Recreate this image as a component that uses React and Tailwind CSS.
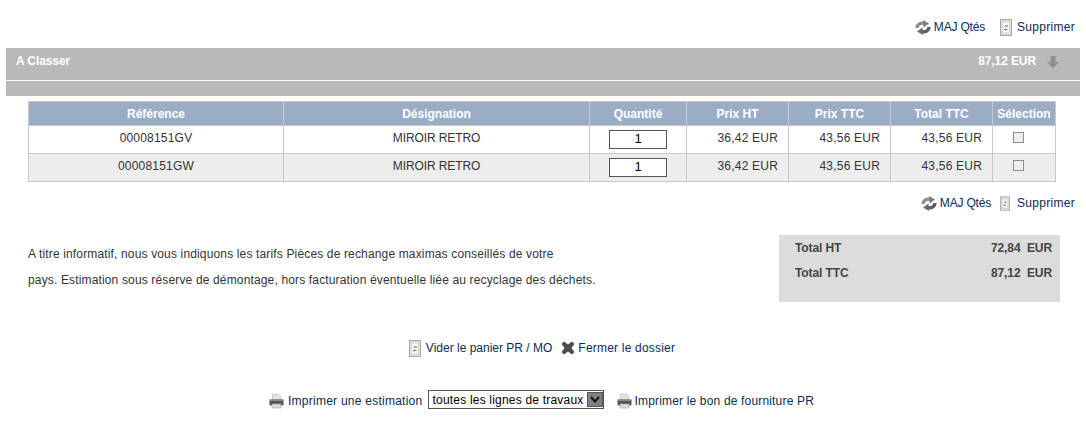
const font = { fontFamily: '"Liberation Sans", Arial, sans-serif' };

const RefreshIcon = () => (
  <svg width="16" height="15" viewBox="0 0 16 15" className="shrink-0">
    <path d="M2 8 C2 4.5 5 2.8 9 3.2" fill="none" stroke="#8f8f8f" strokeWidth="3.4" />
    <path d="M8 0 L14 3.4 L8.5 7.5 Z" fill="#7d7d7d" />
    <path d="M14 7 C14 10.5 11 12.2 7 11.8" fill="none" stroke="#5c5c5c" strokeWidth="3.4" />
    <path d="M8 15 L2 11.6 L7.5 7.5 Z" fill="#6a6a6a" />
  </svg>
);

const TrashIcon = ({ w = 12, h = 17 }) => (
  <svg width={w} height={h} viewBox="0 0 12 17" className="shrink-0">
    <rect x="0.5" y="0.5" width="11" height="16" fill="#dededa" stroke="#a8a8a4" />
    <rect x="2.5" y="3" width="7" height="11" fill="#f6f6f4" stroke="#c8c8c4" strokeWidth="0.6" />
    <path d="M4.5 7 L7.5 7 M6.5 6 L7.5 7 L6.5 8 M7.5 10.5 L4.5 10.5 M5.5 9.5 L4.5 10.5 L5.5 11.5" stroke="#666" strokeWidth="0.8" fill="none" />
  </svg>
);

const PrintIcon = () => (
  <svg width="17" height="16" viewBox="0 0 16 16" className="shrink-0">
    <path d="M4 1 H10 L12 3 V7 H4 Z" fill="#e2e2e2" stroke="#b5b5b5" strokeWidth="0.6" />
    <rect x="1" y="6.5" width="14" height="6" rx="1" fill="#555" />
    <rect x="1" y="6.5" width="14" height="1.5" fill="#8a8a8a" />
    <rect x="3.5" y="11" width="9" height="4" fill="#dcdcdc" stroke="#a5a5a5" strokeWidth="0.6" />
  </svg>
);

const CloseIcon = () => (
  <svg width="14" height="14" viewBox="0 0 14 14" className="shrink-0">
    <path d="M3 0.5 L7 3.5 L11 0.5 L13.5 3 L10.5 7 L13.5 11 L11 13.5 L7 10.5 L3 13.5 L0.5 11 L3.5 7 L0.5 3 Z" fill="#4c4c4c" />
  </svg>
);

const ArrowDownIcon = () => (
  <svg width="14" height="14" viewBox="0 0 14 14" className="shrink-0">
    <path d="M4.5 1 H9.5 V7 H13 L7 13.5 L1 7 H4.5 Z" fill="#8f8f8f" />
  </svg>
);

const ActionLink = ({ icon, children, className = 'gap-[3px]' }) => (
  <a className={`flex items-center text-[#0c2a55] whitespace-nowrap ${className}`}>
    {icon}
    <span>{children}</span>
  </a>
);

const lignes = [
  { ref: '00008151GV', bg: 'bg-white' },
  { ref: '00008151GW', bg: 'bg-[#ededed]' },
];

const entetes = ['Référence', 'Désignation', 'Quantité', 'Prix HT', 'Prix TTC', 'Total TTC', 'Sélection'];

export default function App() {
  return (
    <div style={font} className="w-[1086px] h-[435px] overflow-hidden bg-white text-[12px] text-[#333]">
      <div className="h-[48px] pr-[11px] pt-[18px] flex justify-end items-start gap-[15px]">
        <ActionLink icon={<RefreshIcon />} className="gap-[3px] tracking-[-0.2px]">MAJ Qtés</ActionLink>
        <ActionLink icon={<TrashIcon />} className="gap-[5px] tracking-[0.3px]">Supprimer</ActionLink>
      </div>

      <div className="mx-[6px] w-[1074px] bg-[#b9b9b9] text-white font-bold tracking-[-0.1px]">
        <div className="h-[32px] flex justify-between pl-[10px] pr-[20px] pt-[4px]">
          <span>A Classer</span>
          <span className="flex items-start gap-[10px]">
            87,12 EUR
            <span className="mt-[3px]"><ArrowDownIcon /></span>
          </span>
        </div>
        <div className="h-[1px] bg-white" />
        <div className="h-[15px]" />
      </div>

      <table className="ml-[28px] mt-[5px] w-[1027px] table-fixed border-collapse border border-[#c8c8c8]">
        <colgroup>
          <col className="w-[255px]" />
          <col className="w-[306px]" />
          <col className="w-[97px]" />
          <col className="w-[102px]" />
          <col className="w-[102px]" />
          <col className="w-[102px]" />
          <col className="w-[63px]" />
        </colgroup>
        <thead>
          <tr className="h-[24px] bg-[#9badc6] text-white font-bold">
            {entetes.map((titre) => (
              <th key={titre} className="border border-[#c8c8c8] p-0 font-bold text-center">{titre}</th>
            ))}
          </tr>
        </thead>
        <tbody>
          {lignes.map((ligne) => (
            <tr key={ligne.ref} className={`h-[28px] ${ligne.bg}`}>
              <td className="border border-[#c8c8c8] p-0 pb-[3px] text-center tracking-[0.2px]">{ligne.ref}</td>
              <td className="border border-[#c8c8c8] p-0 pb-[3px] text-center tracking-[-0.1px]">MIROIR RETRO</td>
              <td className="border border-[#c8c8c8] p-0 text-center">
                <input
                  readOnly
                  value="1"
                  className="block mx-auto mb-[1px] w-[58px] h-[19px] bg-white border border-[#555] text-center text-[13px] text-black"
                />
              </td>
              <td className="border border-[#c8c8c8] p-0 pb-[3px] pr-[10px] text-right tracking-[0.2px]">36,42 EUR</td>
              <td className="border border-[#c8c8c8] p-0 pb-[3px] pr-[10px] text-right tracking-[0.2px]">43,56 EUR</td>
              <td className="border border-[#c8c8c8] p-0 pb-[3px] pr-[10px] text-right tracking-[0.2px]">43,56 EUR</td>
              <td className="border border-[#c8c8c8] p-0 pb-[6px] pr-[12px] text-center">
                <span className="inline-block align-middle w-[11px] h-[11px] border border-[#8e8e8e] bg-[#eeeeee]" />
              </td>
            </tr>
          ))}
        </tbody>
      </table>

      <div className="mt-[12px] pr-[11px] flex justify-end gap-[9px]">
        <ActionLink icon={<RefreshIcon />} className="gap-[3px] tracking-[-0.2px]">MAJ Qtés</ActionLink>
        <ActionLink icon={<TrashIcon w={10} h={15} />} className="gap-[7px] tracking-[0.3px]">Supprimer</ActionLink>
      </div>

      <div className="mt-[23px] flex justify-between pl-[28px] pr-[26px]">
        <p className="w-[590px] mt-[6px] leading-[26px] tracking-[0.15px]">
          A titre informatif, nous vous indiquons les tarifs Pièces de rechange maximas conseillés de votre<br />
          pays. Estimation sous réserve de démontage, hors facturation éventuelle liée au recyclage des déchets.
        </p>
        <div className="w-[281px] h-[67px] bg-[#dcdcdc] pl-[16px] pr-[8px] pt-[4px] font-bold text-[#444] tracking-[-0.1px]">
          <div className="flex justify-between h-[25px]"><span>Total HT</span><span>72,84&nbsp; EUR</span></div>
          <div className="flex justify-between"><span>Total TTC</span><span>87,12&nbsp; EUR</span></div>
        </div>
      </div>

      <div className="mt-[37px] pr-[2px] flex justify-center items-center gap-[9px]">
        <ActionLink icon={<TrashIcon />} className="gap-[5px]">Vider le panier PR / MO</ActionLink>
        <ActionLink icon={<CloseIcon />} className="gap-[3px] tracking-[0.2px]">Fermer le dossier</ActionLink>
      </div>

      <div className="mt-[32px] pr-[4px] flex justify-center items-center">
        <ActionLink icon={<PrintIcon />} className="gap-[3px] pt-[3px] tracking-[0.25px]">Imprimer une estimation</ActionLink>
        <div className="relative ml-[6px] mr-[12px] w-[176px] h-[19px]">
          <select className="appearance-none w-full h-full pl-[3px] bg-white border border-[#555] text-[12px] text-black tracking-[0.2px]">
            <option>toutes les lignes de travaux</option>
          </select>
          <span className="absolute right-[1px] top-[2px] w-[16px] h-[15px] flex items-center justify-center bg-[#808080] border border-[#555]">
            <svg width="10" height="7" viewBox="0 0 10 7">
              <path d="M1 1 L5 5.5 L9 1" fill="none" stroke="#111" strokeWidth="2" />
            </svg>
          </span>
        </div>
        <ActionLink icon={<PrintIcon />} className="gap-[1px] pt-[3px] tracking-[0.17px]">Imprimer le bon de fourniture PR</ActionLink>
      </div>
    </div>
  );
}
